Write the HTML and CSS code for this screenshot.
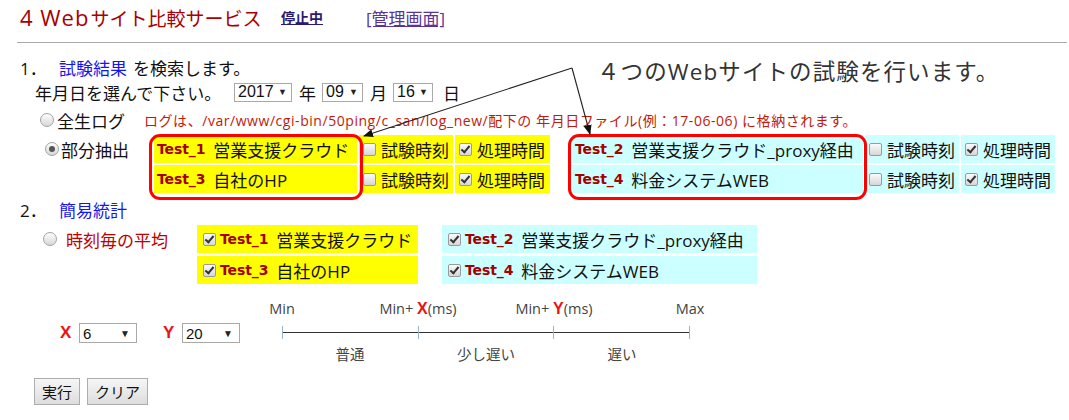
FILE: index.html
```html
<!DOCTYPE html>
<html lang="ja">
<head>
<meta charset="utf-8">
<title>4 Webサイト比較サービス</title>
<link rel="stylesheet" href="styles.css">
</head>
<body>
<div class="page">
  <header class="top">
    <h1 class="title"><span class="lat">4 Web</span>サイト比較サービス</h1>
    <a class="stop" href="#">停止中</a>
    <a class="admin" href="#">[管理画面]</a>
  </header>
  <div class="rule"></div>

  <div class="line l1"><span class="num">1．</span><a class="blue" href="#">試験結果</a><span class="sp">を検索します。</span></div>

  <div class="line l2">
    <span class="lead">年月日を選んで下さい。</span>
    <span class="sel s-year">2017<i>▼</i></span><span class="unit">年</span>
    <span class="sel s-mon">09<i>▼</i></span><span class="unit">月</span>
    <span class="sel s-day">16<i>▼</i></span><span class="unit">日</span>
  </div>

  <div class="line l3">
    <span class="radio r1"></span><span class="rlabel">全生ログ</span>
    <span class="log">ログは、/var/www/cgi-bin/50ping/c_san/log_new/配下の 年月日ファイル(例：17-06-06) に格納されます。</span>
  </div>

  <div class="partial">
    <div class="pick"><span class="radio r2 on"></span><span class="rlabel">部分抽出</span></div>
    <div class="grid g-yellow">
      <div class="cell name y"><b>Test_1</b>営業支援クラウド</div>
      <div class="cell opt y"><span class="cb"></span>試験時刻</div>
      <div class="cell opt y"><span class="cb on"></span>処理時間</div>
      <div class="cell name y"><b>Test_3</b>自社のHP</div>
      <div class="cell opt y"><span class="cb"></span>試験時刻</div>
      <div class="cell opt y"><span class="cb on"></span>処理時間</div>
    </div>
    <div class="grid g-cyan">
      <div class="cell name c"><b>Test_2</b>営業支援クラウド_proxy経由</div>
      <div class="cell opt c"><span class="cb"></span>試験時刻</div>
      <div class="cell opt c"><span class="cb on"></span>処理時間</div>
      <div class="cell name c"><b>Test_4</b>料金システムWEB</div>
      <div class="cell opt c"><span class="cb"></span>試験時刻</div>
      <div class="cell opt c"><span class="cb on"></span>処理時間</div>
    </div>
  </div>

  <div class="line l4"><span class="num">2．</span><a class="blue" href="#">簡易統計</a></div>

  <div class="avg">
    <div class="pick2"><span class="radio r3"></span><span class="rlabel red">時刻毎の平均</span></div>
    <div class="col col-y">
      <div class="acell y"><span class="cb on"></span><b>Test_1</b>営業支援クラウド</div>
      <div class="acell y"><span class="cb on"></span><b>Test_3</b>自社のHP</div>
    </div>
    <div class="col col-c">
      <div class="acell c"><span class="cb on"></span><b>Test_2</b>営業支援クラウド_proxy経由</div>
      <div class="acell c"><span class="cb on"></span><b>Test_4</b>料金システムWEB</div>
    </div>
  </div>

  <div class="scalerow">
    <div class="xy">
      <span class="xl">X</span><span class="sel s-x">6<i>▼</i></span>
      <span class="xl yl">Y</span><span class="sel s-y">20<i>▼</i></span>
    </div>
    <div class="scale">
      <div class="marks">
        <span class="mk"><span>Min</span></span>
        <span class="mk"><span>Min+ <em>X</em>(ms)</span></span>
        <span class="mk"><span>Min+ <em>Y</em>(ms)</span></span>
        <span class="mk"><span>Max</span></span>
      </div>
      <div class="axis">
        <span class="seg"></span><span class="seg"></span><span class="seg last"></span>
      </div>
      <div class="bands">
        <span>普通</span><span>少し遅い</span><span>遅い</span>
      </div>
    </div>
  </div>

  <div class="buttons">
    <button class="btn b1">実行</button><button class="btn b2">クリア</button>
  </div>

  <div class="note">４つのWebサイトの試験を行います。</div>
  <div class="callout c1"></div>
  <div class="callout c2"></div>
  <svg class="arrows" width="1069" height="420" viewBox="0 0 1069 420">
    <defs>
      <marker id="ah" markerWidth="10" markerHeight="8" refX="9" refY="4" orient="auto" markerUnits="userSpaceOnUse">
        <path d="M0,0 L10,4 L0,8 Z" fill="#111"/>
      </marker>
    </defs>
    <line x1="572" y1="68" x2="364" y2="136" stroke="#222" stroke-width="1.1" marker-end="url(#ah)"/>
    <line x1="572" y1="68" x2="590" y2="134" stroke="#222" stroke-width="1.1" marker-end="url(#ah)"/>
  </svg>
</div>
</body>
</html>
```

FILE: styles.css
```css
html, body { margin: 0; padding: 0; background: #fff; }
body {
  font-family: "Open Sans", "Noto Sans CJK JP", sans-serif;
  font-size: 17px;
  color: #111;
}
.page { position: relative; width: 1069px; height: 420px; overflow: hidden; }

.top { height: 34px; display: flex; align-items: center; padding-left: 20px; }
.title { margin: 0; font-weight: normal; font-size: 19px; color: #a80000; line-height: 1; white-space: nowrap; width: 261px; }
.title .lat { font-size: 22px; letter-spacing: 1px; margin-right: 1px; }
.stop { font-size: 14px; font-weight: bold; color: #2b1b6e; text-decoration: underline; }
.admin { margin-left: 43px; font-size: 17px; color: #5b3397; text-decoration: underline; }

.rule { margin: 8px 2px 0 17px; border-top: 1px solid #a8a8a8; height: 0; }

.line { display: flex; align-items: center; height: 24px; white-space: nowrap; }
.l1 { margin-top: 12px; padding-left: 20px; }
.num { width: 39px; display: inline-block; }
.blue { color: #1515ee; text-decoration: none; }
.sp { margin-left: 6px; }

.l2 { margin-top: 1px; padding-left: 35px; }
.lead { width: 199px; display: inline-block; }
.sel {
  display: inline-flex; align-items: center; justify-content: space-between;
  box-sizing: border-box; height: 19px; border: 1px solid #a9a9a9; background: #fff;
  font-family: "Liberation Sans", Arial, sans-serif; font-size: 16px; color: #111;
  padding: 0 4px 0 3px;
}
.sel i { font-style: normal; font-size: 9px; color: #222; }
.s-year { width: 58px; }
.s-mon { width: 41px; }
.s-day { width: 40px; }
.unit { margin: 0 6px 0 7px; }
.l2 .unit:last-child { margin-left: 10px; }

.l3 { margin-top: 4px; padding-left: 40px; }
.radio {
  display: inline-block; box-sizing: border-box; width: 14px; height: 14px; border-radius: 50%;
  border: 1px solid #a3a3a3; background: linear-gradient(#fdfdfd, #d8d8d8); position: relative;
}
.radio.on::after {
  content: ""; position: absolute; left: 3px; top: 3px; width: 6px; height: 6px; border-radius: 50%; background: #555;
}
.rlabel { margin-left: 3px; }
.log { margin-left: 19px; font-family: "Open Sans", "Noto Sans CJK JP", sans-serif; font-size: 14px; letter-spacing: 0.55px; color: #c01a0a; }

.partial { display: flex; align-items: flex-start; padding: 3px 0 5px; height: 58px; }
.pick { display: flex; align-items: center; height: 28px; padding-left: 45px; width: 109px; }
.pick .rlabel { margin-left: 2px; }
.grid { display: grid; grid-template-rows: 28px 28px; row-gap: 2px; column-gap: 2px; }
.g-yellow { grid-template-columns: 203px 94px 95px; }
.g-cyan { margin-left: 22px; grid-template-columns: 291px 94px 94px; }
.cell { display: flex; align-items: center; white-space: nowrap; }
.y { background: #ffff00; }
.c { background: #ccffff; }
.cell.name { padding-left: 3px; }
.cell.opt { padding-left: 4px; }
.cell.opt .cb { margin-right: 5px; }
b {
  font-family: "DejaVu Sans", Verdana, sans-serif; font-weight: bold; font-size: 14px; color: #a30000;
  margin-right: 8px; letter-spacing: -0.1px;
}

.cb {
  display: inline-block; box-sizing: border-box; width: 13px; height: 13px; border-radius: 2px;
  border: 1px solid #9a9a9a; background: linear-gradient(#fbfbfb, #d6d6d6); position: relative; flex: none;
}
.cb.on::after {
  content: ""; position: absolute; left: 3px; top: 0px; width: 3px; height: 7px;
  border: solid #333; border-width: 0 2px 2px 0; transform: rotate(40deg);
}

.l4 { height: 22px; padding-left: 20px; }

.avg { display: flex; align-items: flex-start; margin-top: 5px; }
.pick2 { display: flex; align-items: center; height: 28px; padding-left: 43px; width: 154px; }
.pick2 .rlabel { margin-left: 9px; }
.red { color: #c00000; }
.col { display: flex; flex-direction: column; gap: 3px; }
.col-y { width: 221px; }
.col-c { width: 315px; margin-left: 24px; }
.acell { height: 28px; display: flex; align-items: center; padding-left: 6px; white-space: nowrap; }
.acell .cb { margin-right: 4px; }

.scalerow { display: flex; align-items: flex-start; margin-top: 14px; }
.xy { display: flex; align-items: center; margin-top: 25px; padding-left: 60px; width: 282px; box-sizing: border-box; }
.xl { font-family: "Liberation Sans", Arial, sans-serif; font-weight: bold; color: #ee1111; font-size: 17px; width: 19px; }
.yl { margin-left: 26px; width: 19px; }
.s-x, .s-y { width: 58px; height: 20px; font-size: 15px; }
.s-x i, .s-y i { font-size: 10px; margin-right: 2px; }

.scale { width: 408px; font-family: "Open Sans", "Noto Sans CJK JP", sans-serif; font-size: 14.5px; color: #444; }
.marks { display: flex; justify-content: space-between; height: 20px; align-items: center; }
.mk { width: 0; display: flex; justify-content: center; white-space: nowrap; }
.mk em { font-style: normal; font-weight: bold; color: #ee1111; font-family: "Liberation Sans", Arial, sans-serif; font-size: 16px; }
.axis { display: flex; margin-top: 8px; height: 13px; }
.seg { flex: 1; border-left: 1px solid #9ab4cc; position: relative; }
.seg.last { border-right: 1px solid #9ab4cc; }
.seg::before { content: ""; position: absolute; left: 0; right: 0; top: 6px; border-top: 1px solid #333; }
.bands { display: flex; height: 20px; margin-top: 4px; align-items: center; }
.bands span { flex: 1; text-align: center; font-family: "Noto Sans CJK JP", sans-serif; }

.buttons { display: flex; gap: 7px; padding-left: 34px; margin-top: 15px; }
.btn {
  height: 27px; box-sizing: border-box; border: 1px solid #adadad; border-radius: 0;
  background: linear-gradient(#f6f6f6, #dddddd); font-family: "Noto Sans CJK JP", sans-serif;
  font-size: 15px; color: #111; padding: 0; line-height: 1;
}
.b1 { width: 46px; }
.b2 { width: 61px; }

.note {
  position: absolute; left: 597px; top: 54px; font-size: 22.5px; color: #333; white-space: nowrap;
  font-family: "Open Sans", "Noto Sans CJK JP", sans-serif; letter-spacing: 1.1px;
}
.callout { position: absolute; border: 3px solid #ff0000; border-radius: 11px; box-sizing: border-box; pointer-events: none; }
.c1 { left: 149px; top: 134px; width: 214px; height: 66px; }
.c2 { left: 568px; top: 134px; width: 299px; height: 66px; }
.arrows { position: absolute; left: 0; top: 0; pointer-events: none; }
```
